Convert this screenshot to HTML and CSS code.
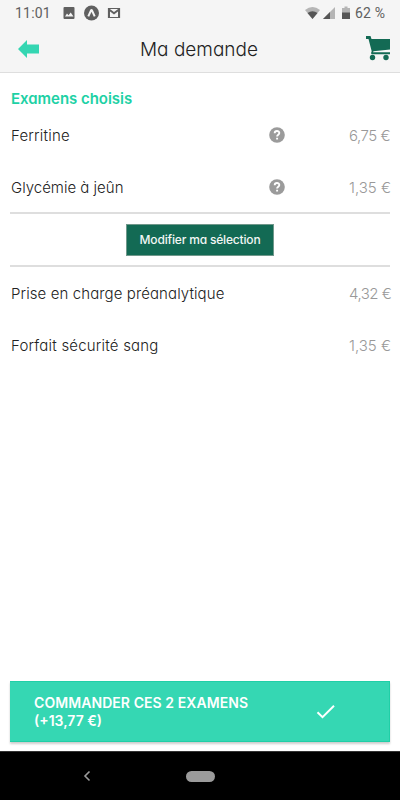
FILE: index.html
```html
<!DOCTYPE html>
<html lang="fr">
<head>
<meta charset="utf-8">
<title>Ma demande</title>
<link rel="stylesheet" href="styles.css">
</head>
<body>
<div class="status">
  <span class="clock">11:01</span>
  <svg class="notifs" width="60" height="18" viewBox="0 0 60 18">
    <path fill="#606060" fill-rule="evenodd" d="M1.500 3h9q1 0 1 1v10q0 1-1 1h-9q-1 0-1-1v-10q0-1 1-1zM2 12.500h8.500L7.700 8.500 5.500 11.300 4 9.500z"/>
    <circle cx="28.500" cy="9" r="7.500" fill="#606060"/>
    <path d="M25.300 12.300L28 6.500q.500-1 1 0L31.700 12.300" fill="none" stroke="#f5f5f5" stroke-width="2"/>
    <path d="M45.500 4.500h11v9h-11z" fill="#f5f5f5" stroke="#606060" stroke-width="1.200"/>
    <path d="M46.200 14V5M55.800 14V5" stroke="#606060" stroke-width="1.600"/>
    <path d="M46 5.500L51 9.300l5-3.800" fill="none" stroke="#606060" stroke-width="1.900"/>
  </svg>
  <svg class="signals" width="46" height="18" viewBox="0 0 46 18">
    <path fill="#b5b5b5" d="M0 6Q7.500 0 15 6L7.500 15z"/>
    <path fill="#565656" d="M2.500 9Q7.500 5.500 12.500 9L7.500 15z"/>
    <path fill="#b5b5b5" d="M30 3v12H18z"/>
    <path fill="#565656" d="M25 8v7h-7z"/>
    <path fill="#b5b5b5" d="M39.500 2.500h3V4H45v5h-8V4h2.500z"/>
    <path fill="#565656" d="M37 8.500h8V15h-8z"/>
  </svg>
  <span class="battery">62 %</span>
</div>
<header class="header">
  <svg class="back" width="22" height="18" viewBox="0 0 22 18"><path fill="#34d6b2" d="M0 9L9 0v4.500h12v9H9V18z"/></svg>
  <h1 class="title">Ma demande</h1>
  <svg class="cart" width="25" height="25" viewBox="0 0 25 25">
    <path fill="#136a54" d="M0 0h4.500l1 3H24v10.500L7.500 15.300 7 16.200h17v2H5.500q-1-1 .200-3L2.500 3H0z"/>
    <circle cx="6.500" cy="21.500" r="2.700" fill="#136a54"/><circle cx="20" cy="21.500" r="2.700" fill="#136a54"/>
  </svg>
</header>
<main class="content">
  <h2 class="section">Examens choisis</h2>
  <div class="row"><span class="name n1">Ferritine</span><span class="help"><svg width="16" height="16" viewBox="0 0 16 16"><circle cx="8" cy="8" r="7.800" fill="#9b9b9b"/><path d="M5.700 6.200C5.700 3.200 10.300 3.300 10.300 6 10.300 7.800 8.100 7.700 8.100 9.600M8.100 10.800V12.500" fill="none" stroke="#fff" stroke-width="1.900"/></svg></span><span class="price">6,75 €</span></div>
  <div class="row"><span class="name n2">Glycémie à jeûn</span><span class="help"><svg width="16" height="16" viewBox="0 0 16 16"><circle cx="8" cy="8" r="7.800" fill="#9b9b9b"/><path d="M5.700 6.200C5.700 3.200 10.300 3.300 10.300 6 10.300 7.800 8.100 7.700 8.100 9.600M8.100 10.800V12.500" fill="none" stroke="#fff" stroke-width="1.900"/></svg></span><span class="price narrow">1,35 €</span></div>
  <div class="edit"><button class="modify">Modifier ma sélection</button></div>
  <div class="row"><span class="name n3">Prise en charge préanalytique</span><span class="price">4,32 €</span></div>
  <div class="row"><span class="name n4">Forfait sécurité sang</span><span class="price narrow">1,35 €</span></div>
</main>
<button class="order">
  <span class="label"><span class="l1">COMMANDER CES 2 EXAMENS</span><br><span class="l2">(+13,77 €)</span></span>
  <svg width="20" height="16" viewBox="0 0 20 16"><path d="M1.500 8.300L6.500 13.200 18 1.800" fill="none" stroke="#fff" stroke-width="2"/></svg>
</button>
<nav class="nav">
  <svg class="nav-back" width="8" height="12" viewBox="0 0 8 12"><path d="M6.500 1.500L2 6l4.500 4.500" fill="none" stroke="#9b9b9b" stroke-width="1.600"/></svg>
  <span class="pill"></span>
</nav>
</body>
</html>
```
FILE: styles.css
```css
* { box-sizing: border-box; }
body {
  margin: 0;
  height: 800px;
  display: flex;
  flex-direction: column;
  background: #fff;
  color: #222;
  font-family: Inter, "Open Sans", sans-serif;
  font-feature-settings: "cv11";
  overflow: hidden;
}
button { border: 0; font-family: inherit; font-feature-settings: inherit; }
.status {
  height: 25px;
  display: flex;
  align-items: center;
  padding: 0 14px 0 15px;
  background: #f5f5f5;
  color: #606060;
  font: 14px/25px Roboto, sans-serif;
}
.clock { width: 48px; padding-top: 1px; letter-spacing: .2px; }
.signals { margin-left: auto; margin-right: 4px; }
.battery { width: 31px; padding-top: 1px; white-space: nowrap; letter-spacing: .2px; }
.header {
  height: 48px;
  display: flex;
  align-items: center;
  padding: 0 9px 0 18px;
  background: #f5f5f5;
  border-bottom: 1px solid #dedede;
}
.title { margin: 2px 0 0 100px; font-size: 19px; font-weight: 300; }
.cart { margin-left: auto; }
.content { flex: 1; padding: 0 10px; }
.section {
  margin: 16px 0 0 1px;
  color: #1dd1a5;
  font-size: 15px;
  line-height: 20px;
  font-weight: 600;
  letter-spacing: -.03px;
}
.row { height: 52px; display: flex; align-items: center; font-size: 15px; font-weight: 300; white-space: nowrap; }
.name { flex: 1; padding-left: 1px; }
.n1 { letter-spacing: .2px; }
.n3 { letter-spacing: .1px; }
.n4 { letter-spacing: .2px; }
.help { width: 80px; height: 16px; }
.price { width: 41px; color: #999; letter-spacing: -.5px; }
.price.narrow { letter-spacing: 0; }
.edit {
  height: 55px;
  margin-top: -1px;
  display: flex;
  align-items: center;
  justify-content: center;
  border: solid #dedede;
  border-width: 2px 0;
}
.modify {
  width: 148px;
  height: 32px;
  padding: 0;
  background: #136a54;
  border: 1px solid #70988b;
  color: #f2f7f5;
  font-size: 12px;
  font-weight: 500;
  letter-spacing: -.17px;
}
.order {
  height: 61px;
  margin: 0 10px 9px;
  padding: 0 53px 0 24px;
  display: flex;
  align-items: center;
  justify-content: space-between;
  background: #35d7b3;
  border: 1px solid #20cfa7;
  border-left: 0;
  box-shadow: 0 2px 2px rgba(0,0,0,.2);
  color: #fff;
  font-size: 14px;
  line-height: 18px;
  font-weight: 600;
  text-align: left;
  white-space: nowrap;
}
.l1 { letter-spacing: .07px; }
.nav { height: 49px; background: #000; border-top: 1px solid #333; display: flex; align-items: center; padding-left: 83px; }
.pill { width: 29px; height: 11px; margin-left: 95px; border-radius: 6px; background: #9b9b9b; }
```
